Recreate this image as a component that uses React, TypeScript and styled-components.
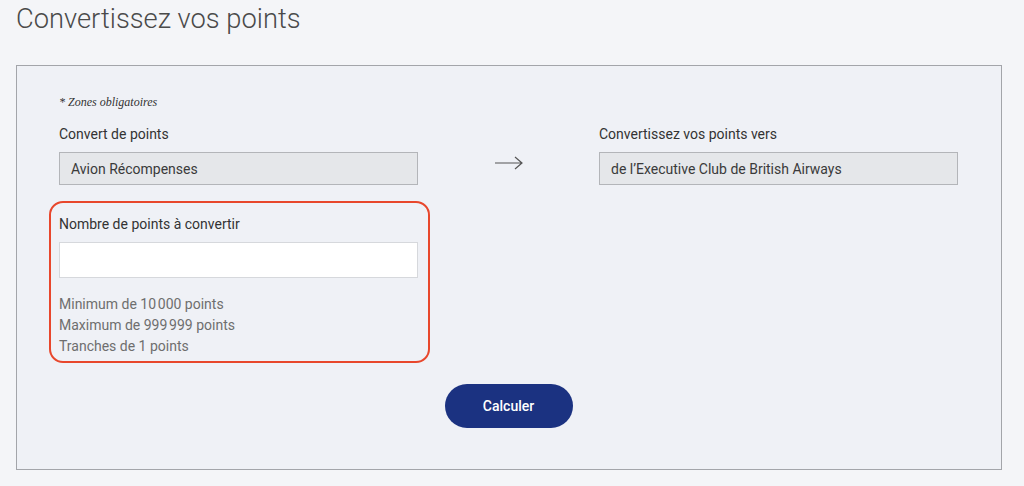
import React, { FC } from 'react';
import styled, { createGlobalStyle } from 'styled-components';

const GlobalStyle = createGlobalStyle`
  html, body {
    margin: 0;
    padding: 0;
    background: #f4f5f8;
    font-family: Roboto, 'Liberation Sans', sans-serif;
  }
`;

const Page = styled.div`
  width: 1024px;
  height: 486px;
  padding: 0 22px 0 16px;
  box-sizing: border-box;
  overflow: hidden;
`;

const Title = styled.h1`
  margin: 0;
  padding-top: 3px;
  height: 62px;
  font-size: 27.3px;
  font-weight: 300;
  color: #4a4a4a;
  line-height: 32px;
`;

const Panel = styled.section`
  box-sizing: border-box;
  height: 405px;
  border: 1px solid #a3a5aa;
  background: #eff1f6;
  padding: 27px 43px 0 42px;
  display: flex;
  flex-direction: column;
`;

const Required = styled.p`
  margin: 0 0 14px;
  font-family: 'Liberation Serif', 'DejaVu Serif', serif;
  font-style: italic;
  font-size: 12px;
  line-height: 18px;
  color: #333;
`;

const Columns = styled.div`
  display: grid;
  grid-template-columns: 359px 1fr 359px;
  align-items: start;
`;

const Field = styled.div`
  display: flex;
  flex-direction: column;
`;

const Label = styled.label`
  font-size: 14px;
  line-height: 18px;
  color: #333;
  margin-bottom: 9px;
`;

const ReadOnlyBox = styled.div`
  box-sizing: border-box;
  height: 33px;
  border: 1px solid #b3b5b9;
  background: #e5e7ea;
  padding: 0 11px;
  display: flex;
  align-items: center;
  font-size: 14px;
  color: #3a3a3a;
`;

const ArrowCell = styled.div`
  display: flex;
  justify-content: center;
  padding-top: 31px;
  color: #555;
`;

const Highlight = styled.div`
  margin: 16px 0 0 -10px;
  width: 381px;
  box-sizing: border-box;
  border: 2px solid #e8472c;
  border-radius: 14px;
  padding: 12px 10px 4px 8px;
  display: flex;
  flex-direction: column;
`;

const TextInput = styled.input`
  box-sizing: border-box;
  width: 359px;
  height: 36px;
  border: 1px solid #d6d8dc;
  background: #fff;
  margin: 0 0 16px;
  outline: none;
`;

const Hint = styled.div`
  font-size: 14px;
  line-height: 21px;
  color: #6e6e6e;
`;

const Actions = styled.div`
  display: flex;
  justify-content: center;
  margin-top: 21px;
`;

const Button = styled.button`
  width: 128px;
  height: 44px;
  border: none;
  border-radius: 22px;
  background: #1b3281;
  color: #fff;
  font-family: Roboto, 'Liberation Sans', sans-serif;
  font-weight: 500;
  font-size: 14px;
  cursor: pointer;
`;

const Arrow: FC = () => (
  <svg width="30" height="14" viewBox="0 0 30 14" fill="none" stroke="currentColor" strokeWidth="1.2">
    <path d="M1 7h27M21 1l7 6-7 6" />
  </svg>
);

const App: FC = () => (
  <>
    <GlobalStyle />
    <Page>
      <Title>Convertissez vos points</Title>
      <Panel>
        <Required>* Zones obligatoires</Required>
        <Columns>
          <div>
            <Field>
              <Label>Convert de points</Label>
              <ReadOnlyBox>Avion Récompenses</ReadOnlyBox>
            </Field>
            <Highlight>
              <Label>Nombre de points à convertir</Label>
              <TextInput type="text" />
              <Hint>Minimum de 10{'\u202f'}000 points</Hint>
              <Hint>Maximum de 999{'\u202f'}999 points</Hint>
              <Hint>Tranches de 1 points</Hint>
            </Highlight>
          </div>
          <ArrowCell>
            <Arrow />
          </ArrowCell>
          <Field>
            <Label>Convertissez vos points vers</Label>
            <ReadOnlyBox>de l’Executive Club de British Airways</ReadOnlyBox>
          </Field>
        </Columns>
        <Actions>
          <Button>Calculer</Button>
        </Actions>
      </Panel>
    </Page>
  </>
);

export default App;
